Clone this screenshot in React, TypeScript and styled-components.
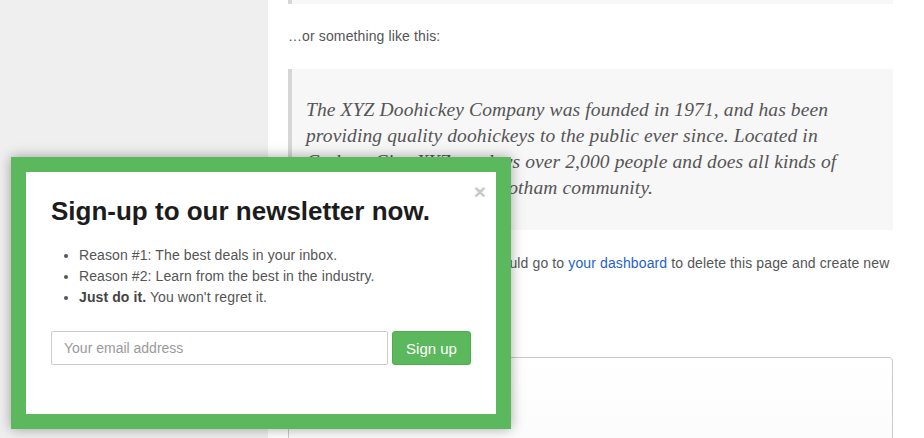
import React from 'react'
import styled, { createGlobalStyle } from 'styled-components'

const GlobalStyle = createGlobalStyle`
  html, body {
    margin: 0;
    padding: 0;
    background: #fff;
  }
  body {
    font-family: "Liberation Sans", Arial, sans-serif;
    font-size: 14px;
    color: #555;
  }
`

const Page = styled.div`
  display: flex;
  width: 924px;
  height: 438px;
  overflow: hidden;
`

const Sidebar = styled.aside`
  width: 268px;
  flex-shrink: 0;
  background: #efefef;
`

const Content = styled.main`
  width: 605px;
  padding: 0 31px 0 20px;
`

const Quote = styled.blockquote<{ $stub?: boolean }>`
  margin: 0;
  background: #f7f7f7;
  border-left: 4px solid #d6d6d6;
  padding: ${(p) => (p.$stub ? '0' : '28px 14px 29px 14px')};
  height: ${(p) => (p.$stub ? '4px' : 'auto')};
  font-family: "Liberation Serif", Georgia, serif;
  font-style: italic;
  font-size: 19.5px;
  line-height: 26px;
  color: #555;
`

const Para = styled.p<{ $top: number }>`
  margin: ${(p) => p.$top}px 0 0;
  line-height: 20px;
  letter-spacing: 0.12px;
  color: #555;

  a {
    color: #1f5fcf;
    text-decoration: none;
  }
`

const CommentBox = styled.div`
  margin-top: 64px;
  height: 120px;
  border: 1px solid #cbcbcb;
  border-radius: 4px;
  background: linear-gradient(#ffffff, #fafafa);
`

const Overlay = styled.div`
  position: fixed;
  left: 11px;
  top: 157px;
  width: 470px;
  padding: 15px;
  background: #5cb85c;
  box-shadow: 0 0 12px rgba(0, 0, 0, 0.35);
`

const Modal = styled.div`
  position: relative;
  background: #fff;
  padding: 25px 25px 49px;
`

const Close = styled.span`
  position: absolute;
  top: 9px;
  right: 10px;
  font-size: 21px;
  font-weight: bold;
  line-height: 21px;
  color: #c8c8c8;
  cursor: pointer;
`

const Title = styled.h2`
  margin: 0;
  font-size: 26px;
  line-height: 29px;
  font-weight: bold;
  color: #1c1c1c;
`

const Reasons = styled.ul`
  margin: 19px 0 0;
  padding-left: 28px;
  line-height: 21px;
  letter-spacing: 0.1px;
  color: #555;

  strong {
    color: #444;
  }
`

const Form = styled.form`
  display: flex;
  gap: 4px;
  margin-top: 23px;
`

const EmailInput = styled.input`
  flex: 1;
  height: 34px;
  box-sizing: border-box;
  padding: 0 12px;
  border: 1px solid #ccc;
  border-radius: 2px;
  font-family: inherit;
  font-size: 14px;
  color: #555;

  &::placeholder {
    color: #9a9a9a;
  }
`

const SubmitButton = styled.button`
  width: 79px;
  height: 34px;
  border: 1px solid #4cae4c;
  border-radius: 3px;
  background: #5cb85c;
  color: #fff;
  font-family: inherit;
  font-size: 15px;
  cursor: pointer;
`

export default function App() {
  return (
    <>
      <GlobalStyle />
      <Page>
        <Sidebar />
        <Content>
          <Quote $stub />
          <Para $top={22}>…or something like this:</Para>
          <Para $top={23} as="div">
            <Quote>
              The XYZ Doohickey Company was founded in 1971, and has been
              <br />
              providing quality doohickeys to the public ever since. Located in
              <br />
              Gotham City, XYZ employs over 2,000 people and does all kinds of
              <br />
              awesome things for the Gotham community.
            </Quote>
          </Para>
          <Para $top={23}>
            As a new WordPress user, you should go to <a href="#">your dashboard</a> to delete this
            page and create new pages for your content. Have fun!
          </Para>
          <CommentBox />
        </Content>
      </Page>
      <Overlay>
        <Modal>
          <Close>×</Close>
          <Title>Sign-up to our newsletter now.</Title>
          <Reasons>
            <li>Reason #1: The best deals in your inbox.</li>
            <li>Reason #2: Learn from the best in the industry.</li>
            <li>
              <strong>Just do it.</strong> You won't regret it.
            </li>
          </Reasons>
          <Form onSubmit={(e) => e.preventDefault()}>
            <EmailInput type="email" placeholder="Your email address" />
            <SubmitButton type="submit">Sign up</SubmitButton>
          </Form>
        </Modal>
      </Overlay>
    </>
  )
}
